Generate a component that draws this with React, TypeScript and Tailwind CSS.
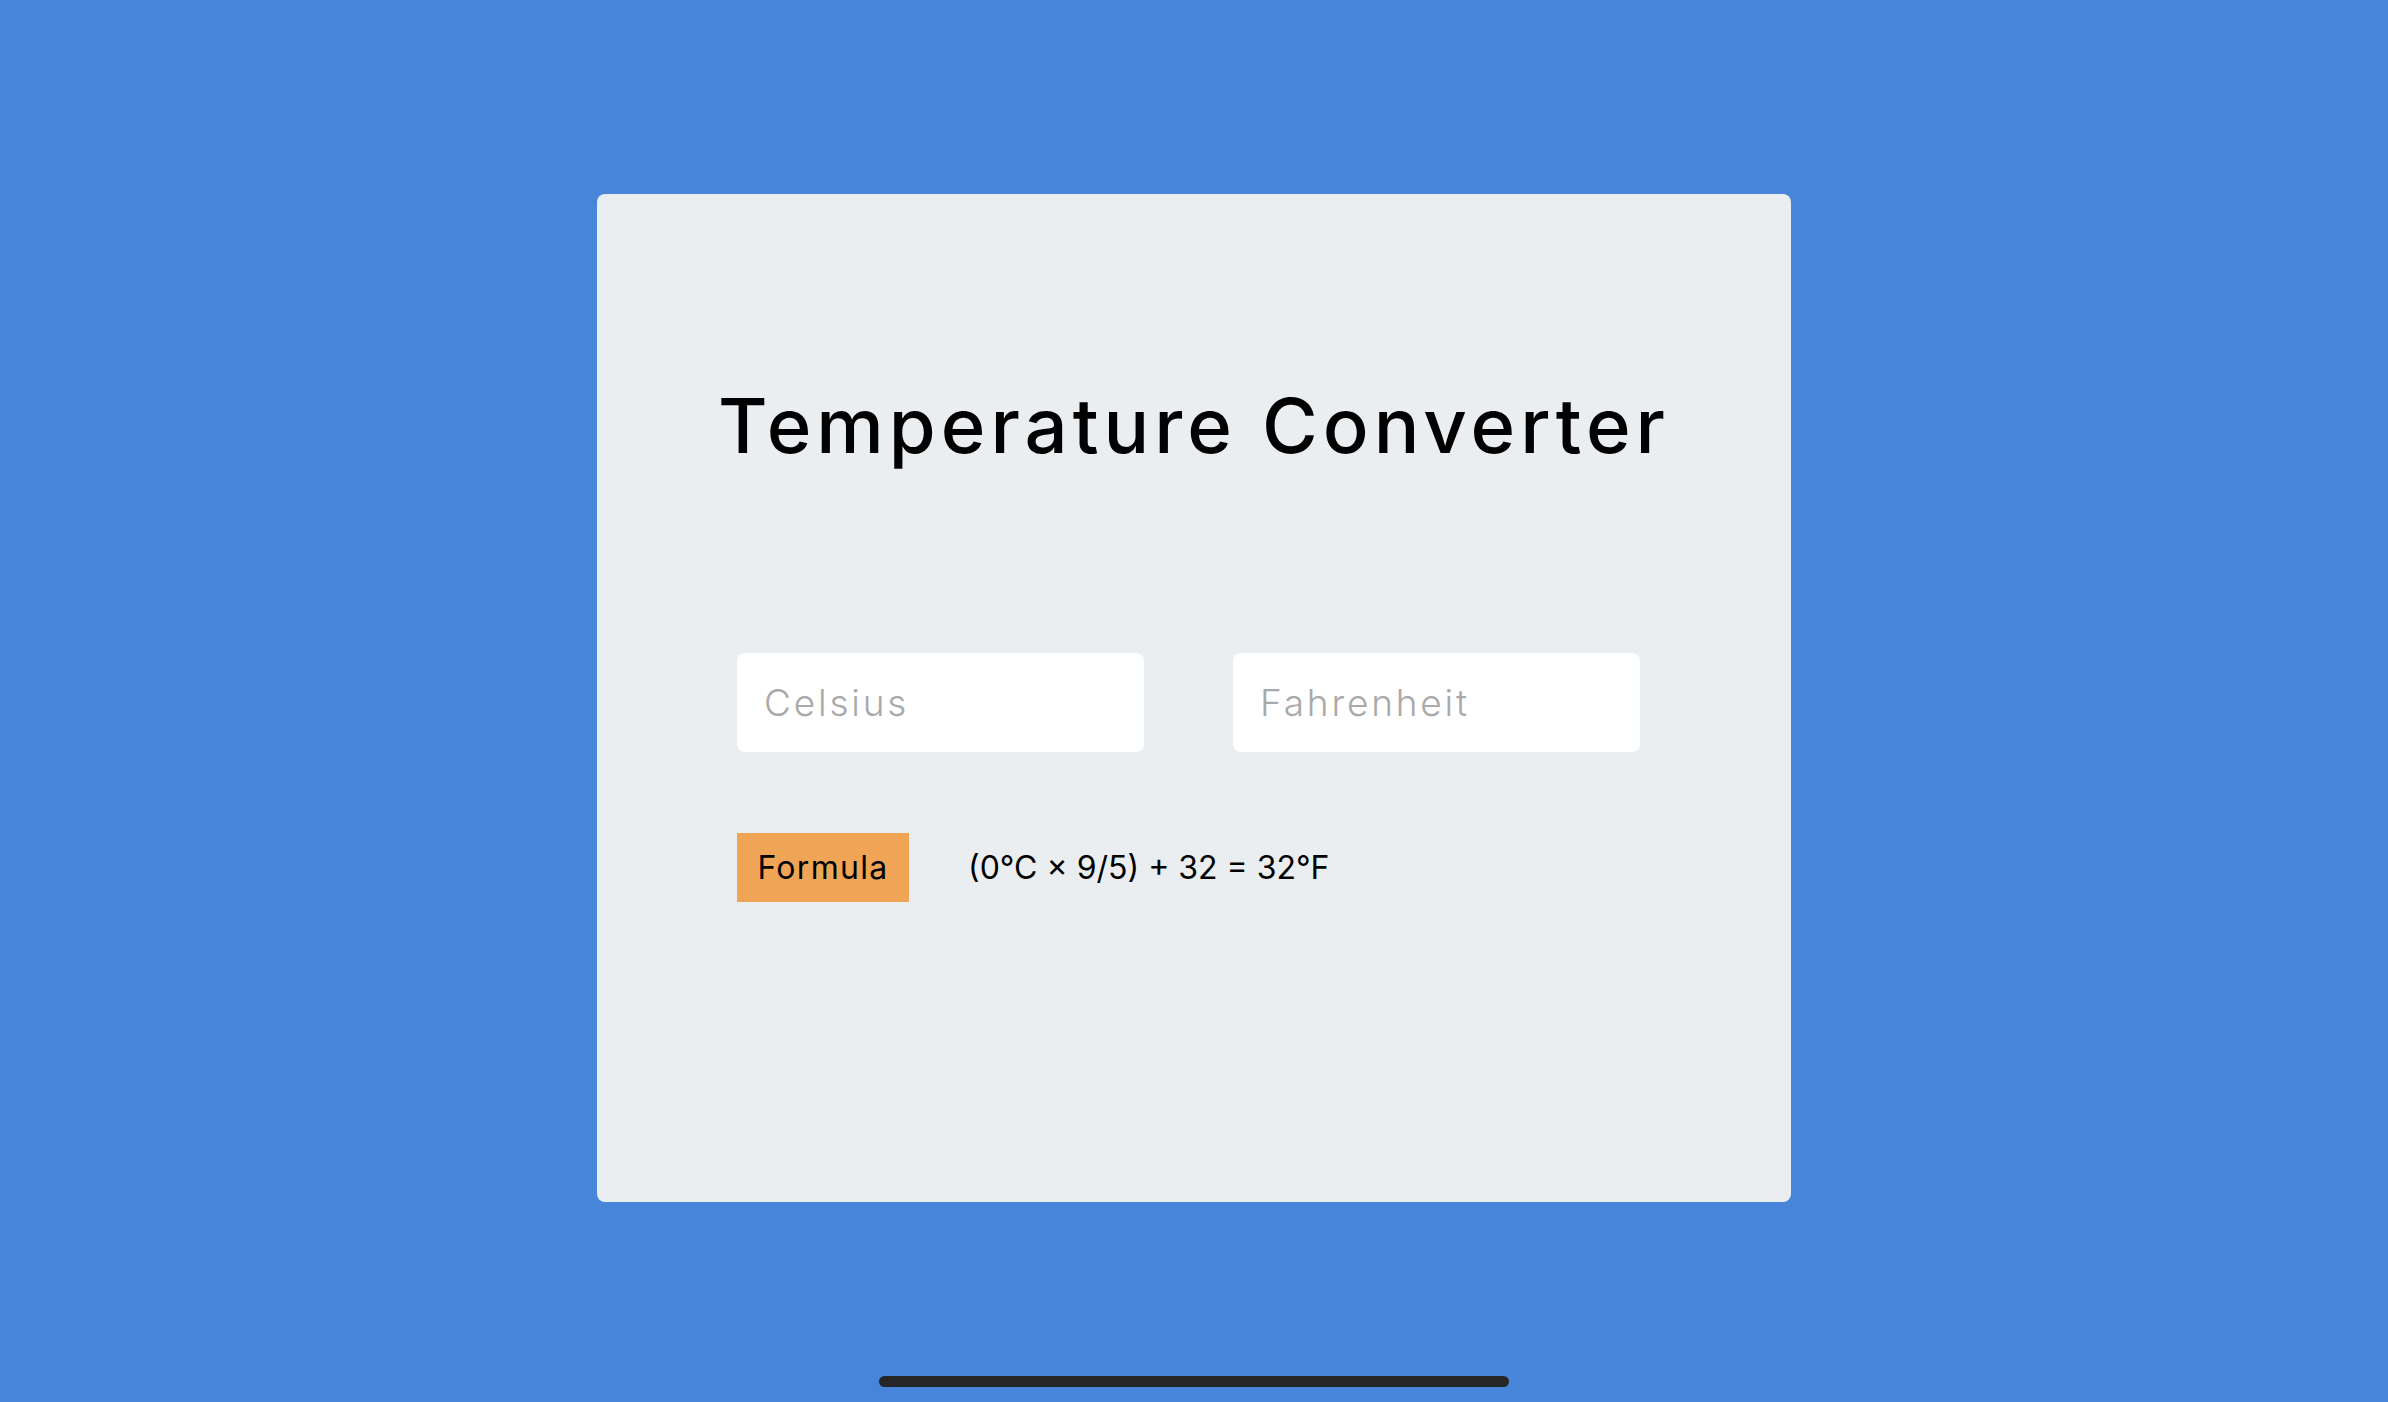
import React, { useState } from 'react';

// Simple Celsius <-> Fahrenheit converter card
export default function App() {
  const [celsius, setCelsius] = useState('');
  const [fahrenheit, setFahrenheit] = useState('');

  const handleCelsius = (value: string) => {
    setCelsius(value);
    const n = parseFloat(value);
    setFahrenheit(isNaN(n) ? '' : String(Math.round(((n * 9) / 5 + 32) * 100) / 100));
  };

  const handleFahrenheit = (value: string) => {
    setFahrenheit(value);
    const n = parseFloat(value);
    setCelsius(isNaN(n) ? '' : String(Math.round((((n - 32) * 5) / 9) * 100) / 100));
  };

  const c = parseFloat(celsius);
  const shownC = isNaN(c) ? 0 : c;
  const shownF = Math.round(((shownC * 9) / 5 + 32) * 100) / 100;

  return (
    <div
      className="h-screen overflow-hidden bg-[#4785d9] flex flex-col items-center pt-[194px]"
      style={{ fontFamily: 'Inter, "Noto Sans", sans-serif' }}
    >
      <div className="w-[1194px] h-[1008px] bg-[#eaeef0] rounded-[8px] flex flex-col">
        <h1 className="pt-[193px] text-center text-[76px] leading-[76px] font-medium text-black tracking-[5px]">
          Temperature Converter
        </h1>

        <div className="mt-[190px] ml-[140px] flex gap-[89px]">
          <input
            type="text"
            value={celsius}
            onChange={e => handleCelsius(e.target.value)}
            placeholder="Celsius"
            className="w-[407px] h-[99px] bg-white rounded-[8px] pl-[27px] text-[37px] font-light tracking-[2.8px] text-black placeholder:text-[#a9a9a9] outline-none"
          />
          <input
            type="text"
            value={fahrenheit}
            onChange={e => handleFahrenheit(e.target.value)}
            placeholder="Fahrenheit"
            className="w-[407px] h-[99px] bg-white rounded-[8px] pl-[27px] text-[37px] font-light tracking-[2.8px] text-black placeholder:text-[#a9a9a9] outline-none"
          />
        </div>

        <div className="mt-[81px] ml-[140px] flex items-center">
          <button className="w-[172px] h-[69px] bg-[#f0a556] text-[32px] tracking-[1.3px] text-black flex items-center justify-center">
            Formula
          </button>
          <span className="ml-[59px] text-[32px] text-black">
            ({shownC}°C × 9/5) + 32 = {shownF}°F
          </span>
        </div>
      </div>

      <div className="mt-[174px] w-[630px] h-[11px] rounded-full bg-[#262626]" />
    </div>
  );
}
